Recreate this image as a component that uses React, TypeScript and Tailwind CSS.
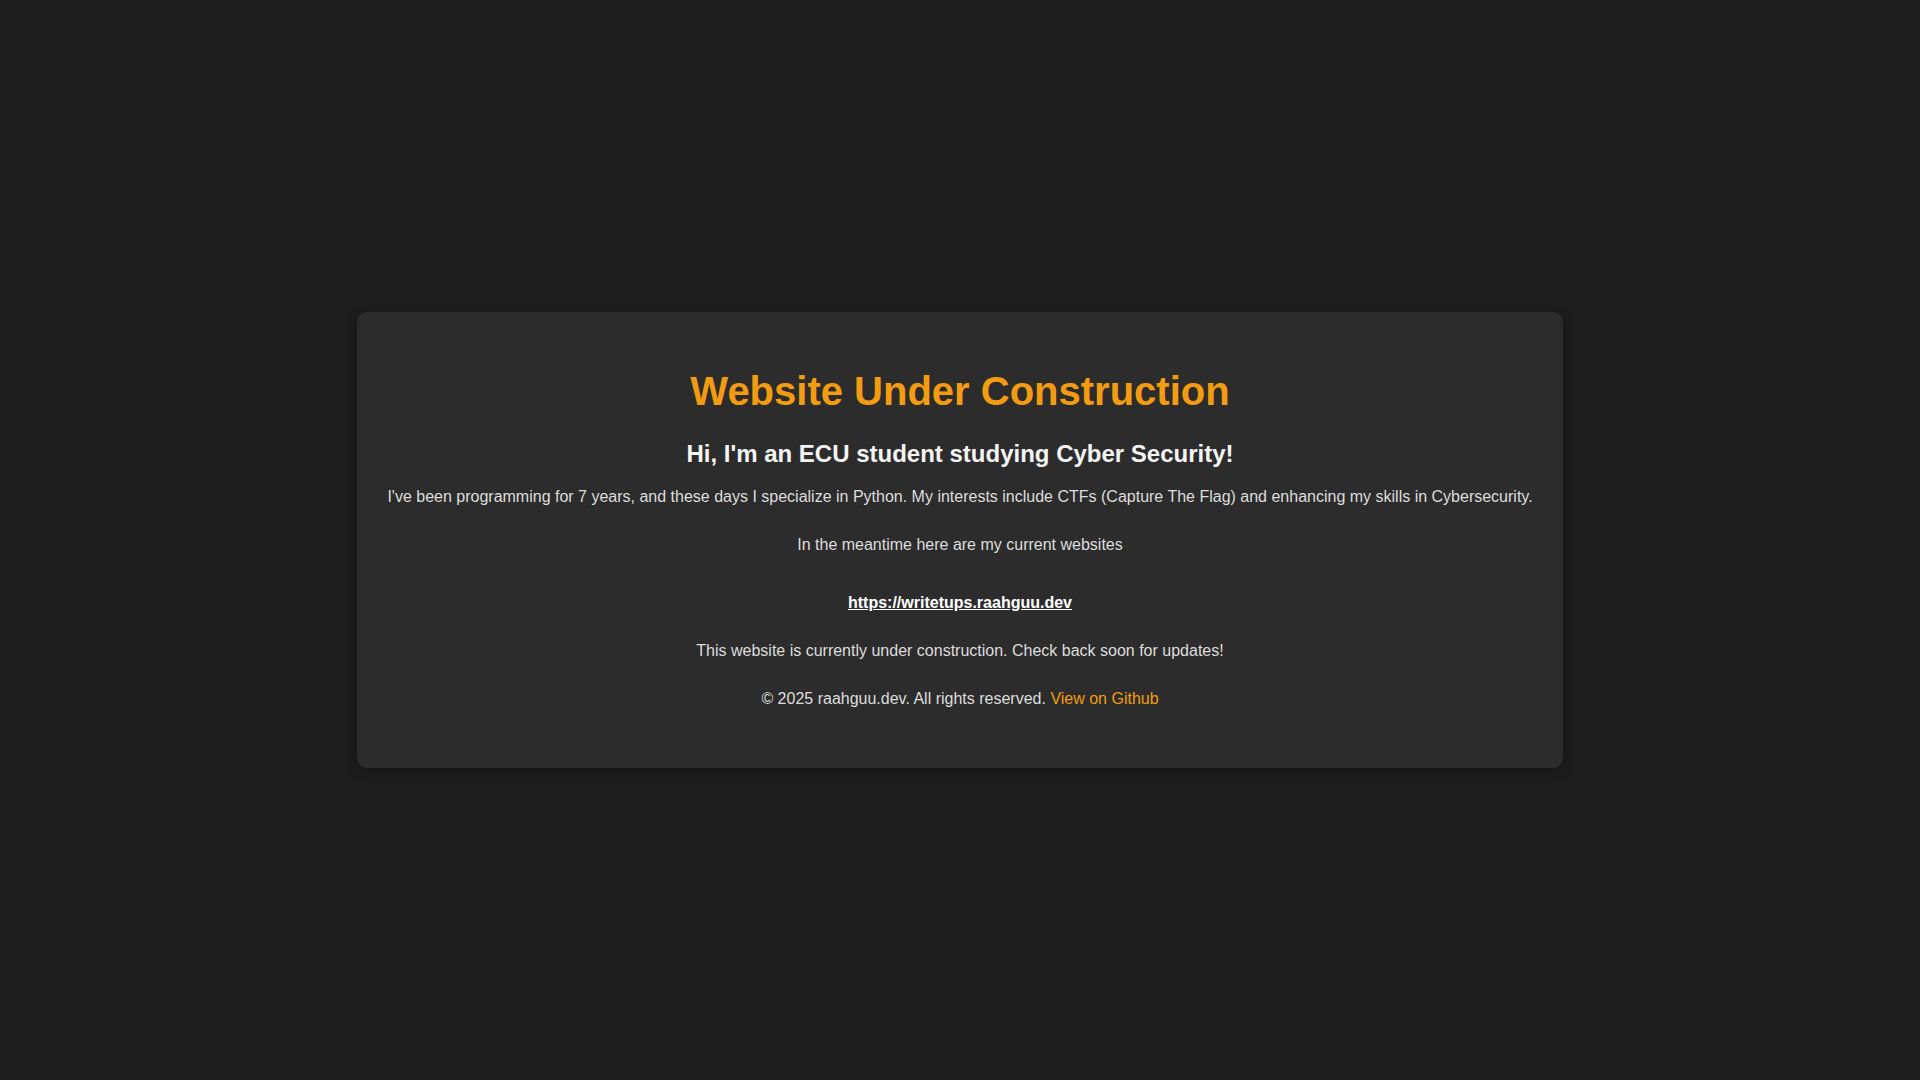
export default function App() {
    return (
        <div className="min-h-screen bg-[#1e1e1e] flex items-center justify-center font-['Liberation_Sans',Arial,sans-serif]">
            <div className="w-fit bg-[#2c2c2c] rounded-[10px] shadow-[0_4px_12px_rgba(0,0,0,0.35)] px-[30px] pt-[30px] pb-[30px] text-center">
                <h1 className="mt-[26px] text-[40px] leading-[46px] font-bold text-[#f39c12]">
                    Website Under Construction
                </h1>
                <h2 className="mt-[26px] text-[24px] leading-[28px] font-bold text-[#f5f5f5]">
                    Hi, I'm an ECU student studying Cyber Security!
                </h2>
                <p className="mt-[17px] text-base leading-6 text-[#dddddd]">
                    I've been programming for 7 years, and these days I specialize in Python. My interests include CTFs (Capture The Flag) and enhancing my skills in Cybersecurity.
                </p>
                <p className="mt-[24px] text-base leading-6 text-[#dddddd]">
                    In the meantime here are my current websites
                </p>
                <div className="mt-[34px] text-base leading-6">
                    <a href="#" className="font-bold text-white underline">
                        https://writetups.raahguu.dev
                    </a>
                </div>
                <p className="mt-[24px] text-base leading-6 text-[#dddddd]">
                    This website is currently under construction. Check back soon for updates!
                </p>
                <p className="mt-[24px] mb-[27px] text-base leading-6 text-[#dddddd]">
                    © 2025 raahguu.dev. All rights reserved.{' '}
                    <a href="#" className="text-[#f39c12]">View on Github</a>
                </p>
            </div>
        </div>
    );
}
